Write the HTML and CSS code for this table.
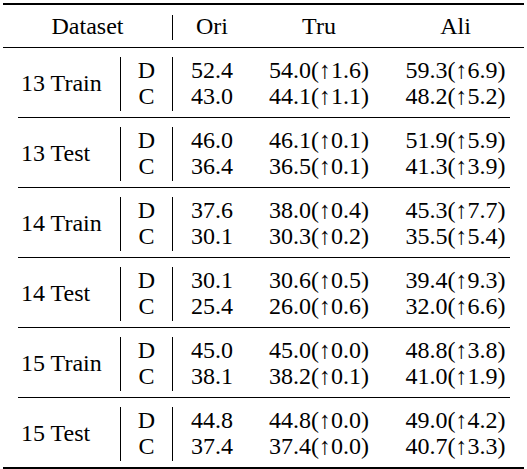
FILE: index.html
```html
<!DOCTYPE html>
<html lang="en">
<head>
    <meta charset="UTF-8">
    <meta name="viewport" content="width=device-width, initial-scale=1.0">
    <title>Results Table</title>
    <link rel="stylesheet" href="styles.css">
</head>
<body>
    <div class="results">
        <div class="rule rule-top"></div>

        <div class="row row-head">
            <div class="cell cell-dataset">Dataset</div>
            <div class="vrule"></div>
            <div class="cell">Ori</div>
            <div class="cell">Tru</div>
            <div class="cell">Ali</div>
        </div>
        <div class="rule rule-mid"></div>

        <div class="row group">
            <div class="cell cell-name">13 Train</div>
            <div class="vrule"></div>
            <div class="cell">D<br>C</div>
            <div class="vrule"></div>
            <div class="cell">52.4<br>43.0</div>
            <div class="cell">54.0(↑1.6)<br>44.1(↑1.1)</div>
            <div class="cell">59.3(↑6.9)<br>48.2(↑5.2)</div>
        </div>
        <div class="rule rule-cmid"></div>

        <div class="row group">
            <div class="cell cell-name">13 Test</div>
            <div class="vrule"></div>
            <div class="cell">D<br>C</div>
            <div class="vrule"></div>
            <div class="cell">46.0<br>36.4</div>
            <div class="cell">46.1(↑0.1)<br>36.5(↑0.1)</div>
            <div class="cell">51.9(↑5.9)<br>41.3(↑3.9)</div>
        </div>
        <div class="rule rule-cmid"></div>

        <div class="row group">
            <div class="cell cell-name">14 Train</div>
            <div class="vrule"></div>
            <div class="cell">D<br>C</div>
            <div class="vrule"></div>
            <div class="cell">37.6<br>30.1</div>
            <div class="cell">38.0(↑0.4)<br>30.3(↑0.2)</div>
            <div class="cell">45.3(↑7.7)<br>35.5(↑5.4)</div>
        </div>
        <div class="rule rule-cmid"></div>

        <div class="row group">
            <div class="cell cell-name">14 Test</div>
            <div class="vrule"></div>
            <div class="cell">D<br>C</div>
            <div class="vrule"></div>
            <div class="cell">30.1<br>25.4</div>
            <div class="cell">30.6(↑0.5)<br>26.0(↑0.6)</div>
            <div class="cell">39.4(↑9.3)<br>32.0(↑6.6)</div>
        </div>
        <div class="rule rule-cmid"></div>

        <div class="row group">
            <div class="cell cell-name">15 Train</div>
            <div class="vrule"></div>
            <div class="cell">D<br>C</div>
            <div class="vrule"></div>
            <div class="cell">45.0<br>38.1</div>
            <div class="cell">45.0(↑0.0)<br>38.2(↑0.1)</div>
            <div class="cell">48.8(↑3.8)<br>41.0(↑1.9)</div>
        </div>
        <div class="rule rule-cmid"></div>

        <div class="row group">
            <div class="cell cell-name">15 Test</div>
            <div class="vrule"></div>
            <div class="cell">D<br>C</div>
            <div class="vrule"></div>
            <div class="cell">44.8<br>37.4</div>
            <div class="cell">44.8(↑0.0)<br>37.4(↑0.0)</div>
            <div class="cell">49.0(↑4.2)<br>40.7(↑3.3)</div>
        </div>

        <div class="rule rule-bottom"></div>
    </div>
</body>
</html>
```

FILE: styles.css
```css
body {
    margin: 0;
    background: #fff;
}
.results {
    width: 521px;
    margin: 3px 0 0 3px;
    font-family: "Liberation Serif", "Times New Roman", serif;
    font-size: 24px;
    color: #000;
}
.rule {
    background: #000;
}
.rule-top,
.rule-bottom {
    height: 2px;
}
.rule-mid {
    height: 1px;
}
.rule-cmid {
    height: 1px;
    margin: 0 14px 0 15px;
}
.row {
    display: grid;
    grid-template-columns: 117px 1px 51px 1px 78px 136px 137px;
}
.row-head {
    height: 42px;
}
.group {
    height: 69px;
}
.cell {
    align-self: center;
    text-align: center;
    line-height: 26px;
    white-space: nowrap;
}
.cell-dataset {
    grid-column: 1 / 4;
}
.cell-name {
    text-align: left;
    padding-left: 18px;
}
.vrule {
    background: #000;
    margin: 9px 0 6px;
}
.row-head .vrule {
    margin: 10px 0 7px;
}
```
